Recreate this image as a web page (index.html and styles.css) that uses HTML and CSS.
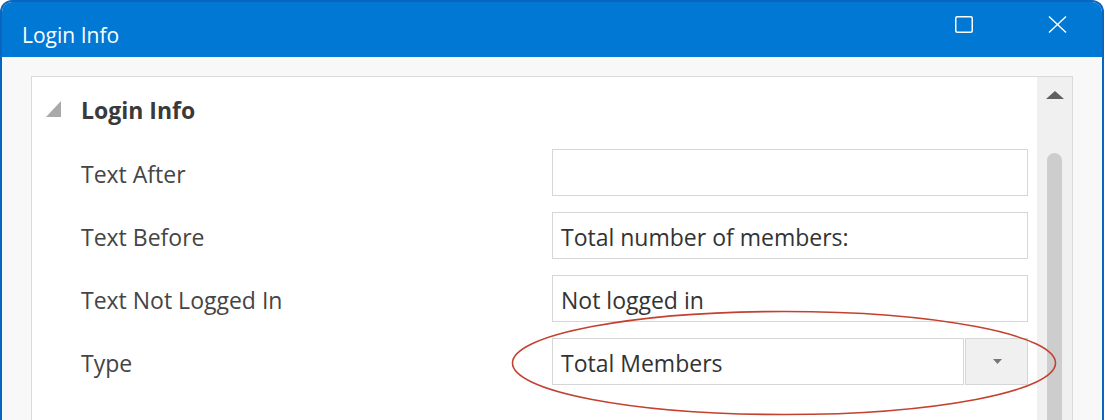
FILE: index.html
```html
<!DOCTYPE html>
<html>
<head>
<meta charset="utf-8">
<title>Login Info</title>
<link rel="stylesheet" href="styles.css">
</head>
<body>
<div class="window">
  <div class="titlebar">
    <div class="title">Login Info</div>
    <div class="controls">
      <svg class="icon" width="18" height="17" viewBox="0 0 18 17"><rect x="0.75" y="0.75" width="16.5" height="15.5" rx="1.5" fill="none" stroke="#fff" stroke-width="1.5"/></svg>
      <svg class="icon" width="19" height="17" viewBox="0 0 19 17"><path d="M1 0.5 L18 16.5 M18 0.5 L1 16.5" stroke="#fff" stroke-width="1.4" fill="none"/></svg>
    </div>
  </div>
  <div class="content">
    <div class="panel">
      <div class="grid">
        <div class="cat">
          <svg class="cat-tri" width="15" height="16" viewBox="0 0 15 16"><polygon points="15,0 15,16 0,16" fill="#a9a9a9"/></svg>
          <span class="cat-name">Login Info</span>
        </div>
        <div class="row"><div class="label">Text After</div><div class="field"></div></div>
        <div class="row"><div class="label">Text Before</div><div class="field">Total number of members:</div></div>
        <div class="row"><div class="label">Text Not Logged In</div><div class="field">Not logged in</div></div>
        <div class="row"><div class="label">Type</div>
          <div class="select">
            <div class="select-text">Total Members</div>
            <div class="select-btn"><svg width="9" height="5" viewBox="0 0 9 5"><polygon points="0,0 9,0 4.5,5" fill="#777"/></svg></div>
          </div>
        </div>
        <div class="row row-next"><div class="label label-next">Mode</div></div>
      </div>
      <div class="scrollbar">
        <svg width="18" height="8" viewBox="0 0 18 8"><polygon points="9,0 18,8 0,8" fill="#606060"/></svg>
        <div class="thumb"></div>
      </div>
    </div>
  </div>
</div>
<svg class="mark" width="548" height="110" viewBox="0 0 548 110"><ellipse cx="274" cy="54" rx="271.5" ry="51.5" fill="none" stroke="#c4412f" stroke-width="1.6"/></svg>
</body>
</html>
```

FILE: styles.css
```css
html, body {
  margin: 0;
  padding: 0;
}
body {
  width: 1106px;
  height: 420px;
  overflow: hidden;
  background: #ffffff;
  font-family: "Open Sans", "Noto Sans", sans-serif;
  position: relative;
}
.window {
  box-sizing: border-box;
  width: 1104px;
  height: 460px;
  border: 2px solid #0a66bd;
  border-bottom: none;
  border-radius: 12px 12px 0 0;
  background: #f8f8f8;
  overflow: hidden;
  display: flex;
  flex-direction: column;
}
.titlebar {
  height: 55px;
  flex: none;
  background: #0078d4;
  display: flex;
  align-items: flex-start;
  padding-left: 20px;
}
.title {
  flex: 1;
  color: #ffffff;
  font-size: 21px;
  line-height: 28px;
  padding-top: 19px;
}
.controls {
  display: flex;
  gap: 75px;
  margin-top: 14px;
  margin-right: 35px;
}
.icon {
  display: block;
}
.content {
  flex: 1;
  display: flex;
  padding: 19px 29px 0 29px;
}
.panel {
  flex: 1;
  display: flex;
  border: 1px solid #dadada;
  border-bottom: none;
  background: #ffffff;
}
.grid {
  flex: 1;
  display: flex;
  flex-direction: column;
}
.cat {
  height: 64px;
  display: flex;
  align-items: center;
  padding-left: 14px;
}
.cat-tri {
  display: block;
  flex: none;
}
.cat-name {
  margin-left: 20px;
  font-size: 23px;
  font-weight: 700;
  color: #3a3a3a;
  padding-top: 1px;
}
.row {
  height: 63px;
  flex: none;
  display: flex;
  align-items: center;
  padding-left: 49px;
}
.row-next {
  align-items: flex-start;
}
.label {
  width: 471px;
  font-size: 23px;
  color: #454545;
  padding-top: 3px;
}
.label-next {
  padding-top: 20px;
}
.field {
  box-sizing: border-box;
  width: 476px;
  height: 47px;
  border: 1px solid #d6d6d6;
  padding: 2px 0 0 8px;
  display: flex;
  align-items: center;
  font-size: 23px;
  color: #333333;
  background: #ffffff;
}
.select {
  width: 476px;
  height: 47px;
  display: flex;
}
.select-text {
  box-sizing: border-box;
  width: 412px;
  height: 47px;
  border: 1px solid #d6d6d6;
  padding: 2px 0 0 8px;
  display: flex;
  align-items: center;
  font-size: 23px;
  color: #333333;
}
.select-btn {
  box-sizing: border-box;
  flex: 1;
  margin-left: 1px;
  height: 47px;
  border: 1px solid #d6d6d6;
  background: #f0f0f0;
  display: flex;
  align-items: center;
  justify-content: center;
}
.select-btn svg {
  display: block;
  margin-left: 2px;
}
.scrollbar {
  width: 35px;
  flex: none;
  margin-left: 9px;
  background: #f0f0f0;
  display: flex;
  flex-direction: column;
  align-items: center;
  padding-top: 14px;
}
.scrollbar svg {
  display: block;
}
.thumb {
  width: 15px;
  height: 400px;
  margin-top: 54px;
  border-radius: 8px;
  background: #cdcdcd;
}
.mark {
  position: absolute;
  left: 510px;
  top: 309px;
}
```
